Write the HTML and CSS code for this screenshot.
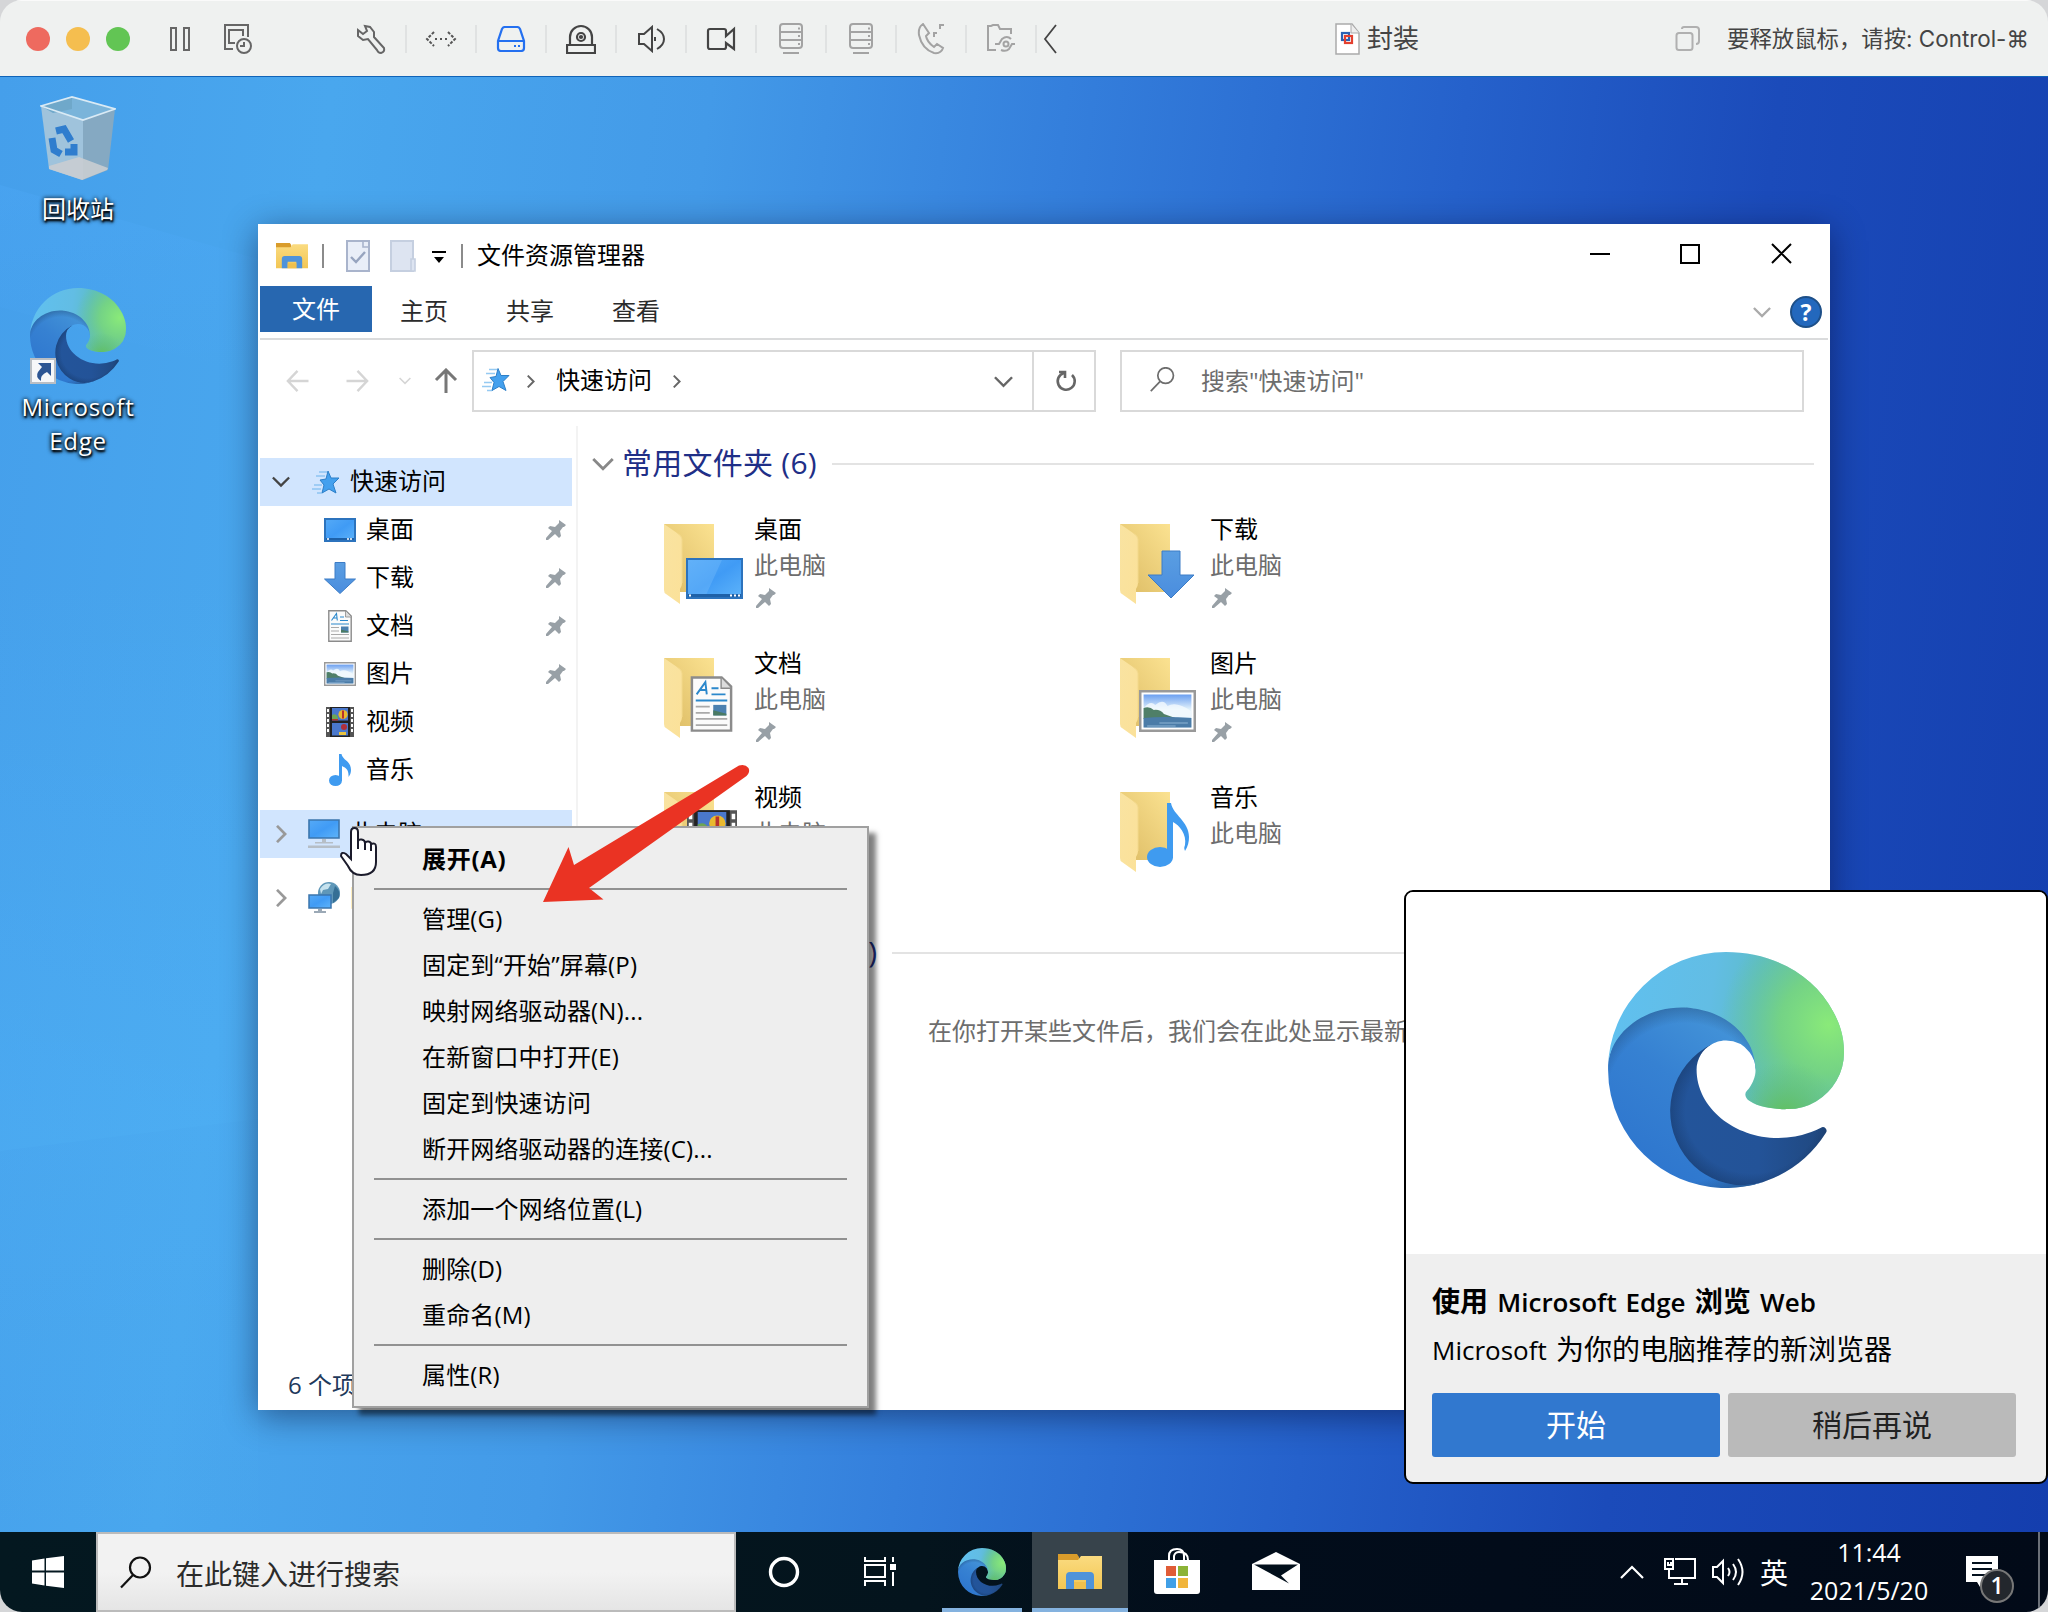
FILE: index.html
```html
<!DOCTYPE html>
<html lang="zh-CN">
<head>
<meta charset="utf-8">
<title>封装</title>
<link rel="stylesheet" href="styles.css">
</head>
<body>
<svg class="defs" width="0" height="0">
  <defs>
    <linearGradient id="e-dark" x1="60" y1="0" x2="240" y2="0" gradientUnits="userSpaceOnUse"><stop offset="0" stop-color="#23559b"/><stop offset=".6" stop-color="#235398"/><stop offset="1" stop-color="#20487f"/></linearGradient>
    <radialGradient id="e-dark2" cx="161" cy="178" r="98" gradientTransform="matrix(1 0 0 .93 0 12)" gradientUnits="userSpaceOnUse"><stop offset=".74" stop-color="#10294d" stop-opacity="0"/><stop offset="1" stop-color="#10294d" stop-opacity=".5"/></radialGradient>
    <linearGradient id="e-mid" x1="150" y1="95" x2="45" y2="240" gradientUnits="userSpaceOnUse"><stop offset="0" stop-color="#4393d8"/><stop offset=".45" stop-color="#3681d2"/><stop offset="1" stop-color="#2e76ce"/></linearGradient>
    <radialGradient id="e-mid2" cx="88" cy="168" r="116" gradientUnits="userSpaceOnUse"><stop offset=".74" stop-color="#1c3f66" stop-opacity="0"/><stop offset="1" stop-color="#1c3f66" stop-opacity=".6"/></radialGradient>
    <linearGradient id="e-top" x1="10" y1="80" x2="210" y2="110" gradientUnits="userSpaceOnUse"><stop offset="0" stop-color="#60c0ef"/><stop offset=".5" stop-color="#62bde4"/><stop offset=".75" stop-color="#5dbdc9"/><stop offset="1" stop-color="#63c0b0"/></linearGradient>
    <radialGradient id="e-green" cx="244" cy="84" r="118" gradientTransform="rotate(10 244 84)" gradientUnits="userSpaceOnUse"><stop offset="0" stop-color="#8aea79"/><stop offset=".45" stop-color="#76d580" stop-opacity=".9"/><stop offset="1" stop-color="#65c38b" stop-opacity="0"/></radialGradient>
    <radialGradient id="e-green2" cx="196" cy="186" r="62" gradientUnits="userSpaceOnUse"><stop offset="0" stop-color="#61c055"/><stop offset="1" stop-color="#61c070" stop-opacity="0"/></radialGradient>
    <linearGradient id="g-blue" x1="0" y1="0" x2="1" y2="1"><stop offset="0" stop-color="#55aaf7"/><stop offset=".5" stop-color="#409bf5"/><stop offset="1" stop-color="#5eb4fa"/></linearGradient>
    <linearGradient id="g-back" x1="0" y1="1" x2="1" y2="0"><stop offset="0" stop-color="#dcbb63"/><stop offset="1" stop-color="#fbe291"/></linearGradient>
    <linearGradient id="g-front" x1="0" y1="0" x2="1" y2="1"><stop offset="0" stop-color="#f9e3a1"/><stop offset="1" stop-color="#fbe199"/></linearGradient>
    <linearGradient id="g-exp" x1="0" y1="0" x2="0" y2="1"><stop offset="0" stop-color="#fadb80"/><stop offset="1" stop-color="#f3c653"/></linearGradient>
    <linearGradient id="g-sky" x1="0" y1="0" x2="0" y2="1"><stop offset="0" stop-color="#6b9ff0"/><stop offset=".45" stop-color="#e3f2fb"/><stop offset="1" stop-color="#cfe4f4"/></linearGradient>
    <linearGradient id="g-arrow" x1="0" y1="0" x2="0" y2="1"><stop offset="0" stop-color="#5a9ee2"/><stop offset="1" stop-color="#4a8dde"/></linearGradient>

    <symbol id="edge" viewBox="0 0 256 256"><g transform="translate(-4.63 -4.92)">
      <path fill="url(#e-dark)" d="M235.68 195.46a93.73 93.73 0 01-10.54 4.71 101.87 101.87 0 01-35.9 6.46c-47.32 0-88.54-32.55-88.54-74.32A31.48 31.48 0 01117.13 105c-42.8 1.8-53.8 46.4-53.8 72.53 0 73.88 68.09 81.37 82.76 81.37 7.91 0 19.84-2.3 27-4.56l1.31-.44a128.34 128.34 0 0066.6-52.8 4 4 0 00-5.32-5.64z"/>
      <path fill="url(#e-dark2)" d="M235.68 195.46a93.73 93.73 0 01-10.54 4.71 101.87 101.87 0 01-35.9 6.46c-47.32 0-88.54-32.55-88.54-74.32A31.48 31.48 0 01117.13 105c-42.8 1.8-53.8 46.4-53.8 72.53 0 73.88 68.09 81.37 82.76 81.37 7.91 0 19.84-2.3 27-4.56l1.31-.44a128.34 128.34 0 0066.6-52.8 4 4 0 00-5.32-5.64z"/>
      <path fill="url(#e-mid)" d="M110.34 246.34A79.2 79.2 0 0187.6 225a80.72 80.72 0 0129.53-120c3.12-1.47 8.45-4.13 15.54-4a32.35 32.35 0 0125.69 13 31.88 31.88 0 016.36 18.66c0-.21 24.46-79.6-80-79.6-43.9 0-80 41.66-80 78.21a130.15 130.15 0 0012.11 56 128 128 0 00156.38 67.11 75.55 75.55 0 01-62.78-8z"/>
      <path fill="url(#e-mid2)" d="M110.34 246.34A79.2 79.2 0 0187.6 225a80.72 80.72 0 0129.53-120c3.12-1.47 8.45-4.13 15.54-4a32.35 32.35 0 0125.69 13 31.88 31.88 0 016.36 18.66c0-.21 24.46-79.6-80-79.6-43.9 0-80 41.66-80 78.21a130.15 130.15 0 0012.11 56 128 128 0 00156.38 67.11 75.55 75.55 0 01-62.78-8z"/>
      <path fill="url(#e-top)" d="M156.94 153.78c-.81 1.05-3.3 2.5-3.3 5.66 0 2.61 1.7 5.12 4.72 7.23 14.38 10 41.49 8.68 41.56 8.68a59.56 59.56 0 0030.27-8.35 61.38 61.38 0 0030.43-52.88c.26-22.41-8-37.31-11.34-43.91-21.19-41.45-66.93-65.29-116.67-65.29a128 128 0 00-128 126.2c.48-36.54 36.8-66.05 80-66.05 3.5 0 23.46.34 42 10.07 16.34 8.58 24.9 18.94 30.85 29.21 6.18 10.67 7.28 24.15 7.28 29.52s-2.74 13.33-7.8 19.91z"/>
      <path fill="url(#e-green)" d="M156.94 153.78c-.81 1.05-3.3 2.5-3.3 5.66 0 2.61 1.7 5.12 4.72 7.23 14.38 10 41.49 8.68 41.56 8.68a59.56 59.56 0 0030.27-8.35 61.38 61.38 0 0030.43-52.88c.26-22.41-8-37.31-11.34-43.91-21.19-41.45-66.93-65.29-116.67-65.29a128 128 0 00-128 126.2c.48-36.54 36.8-66.05 80-66.05 3.5 0 23.46.34 42 10.07 16.34 8.58 24.9 18.94 30.85 29.21 6.18 10.67 7.28 24.15 7.28 29.52s-2.74 13.33-7.8 19.91z"/>
      <path fill="url(#e-green2)" d="M156.94 153.78c-.81 1.05-3.3 2.5-3.3 5.66 0 2.61 1.7 5.12 4.72 7.23 14.38 10 41.49 8.68 41.56 8.68a59.56 59.56 0 0030.27-8.35 61.38 61.38 0 0030.43-52.88V114H164.740q1 10-.74 22-1 10-7.060 17.780z"/>
    </g></symbol>

    <symbol id="explorer" viewBox="0 0 44 36"><path fill="#d99c2b" d="M0 0h19l2 3v4H0z"/><path fill="url(#g-exp)" d="M0 6h20l3-4h21v33H0z"/><path fill="#4f93da" d="M8 35V22q0-4 4-4h20q4 0 4 4v13h-8v-9H16v9z"/><path fill="#f0c04c" d="M16 28h12v7H16z"/></symbol>
    <symbol id="pin" viewBox="0 0 20 20"><path fill="#98a0a6" d="M13 0l7 5-2 2-1 0-3 4 1 5-2 2-4-4-7 6-2 0 0-2 6-7-4-3 2-2 5 1 4-4z"/></symbol>
    <symbol id="star" viewBox="0 0 28 24"><path fill="#43a0ee" stroke="#2d7fc8" stroke-width="1" d="M16 1l3 7h8l-6 6 3 9-7-4-7 4 2-8-4-5 6-1z"/><path stroke="#7dbdf0" stroke-width="1.600" d="M7 2h8M4 6h9M2 15h8M0 19h9M5 23h5" opacity=".8"/></symbol>
    <symbol id="screen" viewBox="0 0 32 24"><path fill="url(#g-blue)" stroke="#2c73bd" stroke-width="2" d="M1 1h30v22H1z"/><path fill="#1e61a8" d="M2 20h28v2H2z"/><path stroke="#fff" stroke-width="1.500" d="M3 21h2M23 21h2M26 21h2"/></symbol>
    <symbol id="down" viewBox="0 0 32 32"><path fill="url(#g-arrow)" stroke="#3c7cc6" stroke-width="1" d="M11 .5h10V17h10.500L16 31.500.5 17H11z"/></symbol>
    <symbol id="doc" viewBox="0 0 24 32"><path fill="#fbfbfb" stroke="#8b8b8b" stroke-width="1.400" d="M.8.800h17l5.400 5.200v25.200H.8z"/><path fill="#ddd" stroke="#8b8b8b" stroke-width=".8" d="M17.500 1v6H23"/><path fill="none" stroke="#2b88cc" stroke-width="1.100" d="M3.500 10.500L8.500 3.500l.8 7M5.500 8h3.500M12 7h4M12 10.500h8M3 14h18"/><path stroke="#a9a9a9" stroke-width="1" d="M3 17.500h8M3 21h8M3 24.500h18M3 28h18"/><path fill="#4b80b0" d="M13 16.500h7.500v6H13z"/><path fill="#4a7a63" d="M13 19.500l7.500 2v1H13z"/></symbol>
    <symbol id="pic" viewBox="0 0 56 42" preserveAspectRatio="none"><path fill="#fff" stroke="#999" stroke-width="2.500" d="M1.200 1.200h53.600v39.600H1.200z"/><path fill="url(#g-sky)" d="M4.500 4.500h47v33h-47z"/><path fill="#f4fafe" d="M5 18q6-8 11-3 8-7 12 1 9-5 23 5v6H5z" opacity=".8"/><path fill="#4f7f68" d="M4.500 18q6-2 10 2 6-1 10 4l14 5H4.500z"/><path fill="#4b7ca8" d="M4.500 28q20-2 47 0v9.500h-47z"/><path stroke="#8db4d4" d="M20 33h28M8 36h28"/></symbol>
    <symbol id="film" viewBox="0 0 28 30"><path fill="#555" d="M0 0h28v30H0z"/><path fill="#fff" d="M1 2h2v3H1zM1 7h2v3H1zM1 12h2v3H1zM1 17h2v3H1zM1 22h2v3H1zM25 2h2v3h-2zM25 7h2v3h-2zM25 12h2v3h-2zM25 17h2v3h-2zM25 22h2v3h-2z"/><path fill="#222" d="M4 0h20v30H4z"/><path fill="#4a78cc" d="M6 1h16v12.500H6zM6 16h16v12.500H6z"/><circle cx="17" cy="7.500" r="4.600" fill="#e9b92f"/><path fill="#b8322c" d="M16 3.500h2v8h-2zM6 11h6v2.500H6z"/><path fill="#6ea654" d="M6 8q4-2 6 2v2H6z"/><circle cx="18" cy="20" r="3" fill="#b02f3a"/><path fill="#e9c341" d="M13 25h7v3h-7z"/></symbol>
    <symbol id="note" viewBox="0 0 22 32"><ellipse cx="6.500" cy="26.500" rx="6.500" ry="5.500" fill="#3f9bf0"/><path fill="#3f9bf0" d="M10 0h2.500c1 6 9.500 7 9.500 16 0 3-1 5-2.500 7 .5-8-3-9-6.500-11v15h-3z"/></symbol>
    <symbol id="note-l" viewBox="0 0 44 64"><ellipse cx="13" cy="54" rx="13" ry="10" fill="#3f9bf0"/><path fill="#3f9bf0" d="M20 0h4c2 12 18 18 18 34 0 5-1 9-4 14-1-3-1-3 0-6 2-11-6-20-12-23v36h-6z"/></symbol>
    <symbol id="pc" viewBox="0 0 32 30"><path fill="url(#g-blue)" stroke="#3b76ad" stroke-width="1.600" d="M1 1h30v18H1z"/><path fill="#b6bec6" d="M14 20h4v3h7v1.500H7V23h7zM0 26.500h32v2.500H0z"/></symbol>
    <symbol id="net" viewBox="0 0 32 32"><circle cx="21" cy="11" r="11" fill="#5f97b8"/><path fill="#c6e2ee" d="M12 7q5-7 11-5l-3 5-5 1-2 4z"/><path fill="#356f95" d="M27 4q6 5 4 12l-6 5V11z"/><path fill="url(#g-blue)" stroke="#3b76ad" stroke-width="1.500" d="M1 13h22v13H1z"/><path fill="#9ba9b6" d="M10 27h4v2h4v2H6v-2h4z"/></symbol>
    <symbol id="folder" viewBox="0 0 50 80"><path fill="url(#g-back)" d="M0 0h50v68H16z"/><path fill="url(#g-front)" d="M0 0l13 9q5 3 5 6v44q0 3-2 6v15L2 70q-2-1-2-4z"/><path stroke="#f3d98c" fill="none" d="M13 9q5 3 5 6v44"/></symbol>
    <symbol id="mag" viewBox="0 0 32 32"><g fill="none" stroke="currentColor" stroke-width="2.200"><circle cx="20" cy="11" r="10"/><path d="M13 18.500L1 31"/></g></symbol>
    <symbol id="ch-d" viewBox="0 0 20 12"><path fill="none" stroke="currentColor" stroke-width="2.600" d="M1 1l9 9 9-9"/></symbol>
    <symbol id="ch-r" viewBox="0 0 12 20"><path fill="none" stroke="currentColor" stroke-width="3" d="M1 1l9 9-9 9"/></symbol>
    <symbol id="arr" viewBox="0 0 24 24"><path fill="none" stroke="currentColor" stroke-width="2.600" d="M24 12H2M12 1L1.500 12 12 23"/></symbol>
    <symbol id="server" viewBox="0 0 26 32"><g fill="none" stroke="currentColor" stroke-width="2"><rect x="2" y="1" width="22" height="24" rx="3"/><path d="M2 9h22M2 17h22M5 30h16M20 5.500h2M20 13h2M20 21h2"/></g></symbol>
  </defs>
</svg>

<div class="frame">
  <header class="macbar">
    <div class="lights"><i class="light red"></i><i class="light yellow"></i><i class="light green"></i></div>
    <div class="power">
      <svg width="22" height="26" viewBox="0 0 22 26" fill="none" stroke="#666" stroke-width="2"><path d="M2 2h5v22H2zM15 2h5v22h-5z"/></svg>
      <svg width="30" height="32" viewBox="0 0 30 32" fill="none" stroke="#666" stroke-width="2"><path d="M10 26H2V2h23v12M12 20H6V7h14v6"/><circle cx="21" cy="23" r="7"/><path d="M21 19v4h-4"/></svg>
    </div>
    <div class="tools">
      <span class="tool"><svg width="30" height="30" viewBox="0 0 30 30" fill="none" stroke="#666" stroke-width="2"><path d="M9 2l5 1 4 5v5l10 11q1 4-3 5-3 0-4-3L12 15 7 16 2 12V6l5 4 4-3z"/></svg></span>
      <span class="tool"><svg width="32" height="18" viewBox="0 0 32 18" fill="none" stroke="#555" stroke-width="2"><path stroke-dasharray="3 1.500" d="M9 2L2 9l7 7M23 2l7 7-7 7"/><path stroke-dasharray="2 3" d="M10 9h13"/></svg></span>
      <span class="tool"><svg width="30" height="26" viewBox="0 0 30 26" fill="none" stroke="#2470f0" stroke-width="2.200"><path d="M6 3q1-2 3-2h12q2 0 3 2l4 12v7q0 3-3 3H5q-3 0-3-3v-7zM2 15h26M18 20h2M22 20h2"/></svg></span>
      <span class="tool"><svg width="30" height="30" viewBox="0 0 30 30" fill="none" stroke="#444" stroke-width="2.200"><path d="M4 20V13a11 11 0 0122 0v7M1 21h28v8H1z"/><circle cx="15" cy="13" r="4"/><circle cx="15" cy="13" r="1"/></svg></span>
      <span class="tool"><svg width="28" height="28" viewBox="0 0 28 28" fill="none" stroke="#444" stroke-width="2"><path d="M2 9h5l8-7v24l-8-7H2zM18 12v4M20 4q7 4 7 10t-7 10"/></svg></span>
      <span class="tool"><svg width="30" height="26" viewBox="0 0 30 26" fill="none" stroke="#444" stroke-width="2.200"><path d="M4 3h14q2 0 2 2v5l8-7v20l-8-6v4q0 2-2 2H4q-2 0-2-2V5q0-2 2-2z"/></svg></span>
      <span class="tool dim"><svg width="26" height="32"><use href="#server"/></svg></span>
      <span class="tool dim"><svg width="26" height="32"><use href="#server"/></svg></span>
      <span class="tool dim"><svg width="28" height="32" viewBox="0 0 28 32" fill="none" stroke="currentColor" stroke-width="2"><path d="M6 1Q1 4 2 12q3 14 15 18 7 1 9-5l-6-4-3 3Q10 19 9 13l3-3zM17 14v-4h3M23 6V2h4"/></svg></span>
      <span class="tool dim"><svg width="30" height="30" viewBox="0 0 30 30" fill="none" stroke="currentColor" stroke-width="2"><path d="M10 26H2V2h3l2-1h5l2 4h11v5M9 20h4l3-5q5-4 9 0M29 20h-3l-3 5q-3 3-8 1"/><circle cx="20" cy="20" r="2.500"/></svg></span>
      <svg class="collapse" width="14" height="30" viewBox="0 0 14 30" fill="none" stroke="#444" stroke-width="1.800"><path d="M13 1L2 15l11 14"/></svg>
    </div>
    <div class="vmname">
      <svg width="25" height="32" viewBox="0 0 25 32"><path fill="#fff" stroke="#aaa" stroke-width="1.500" d="M1 1h16l7 9v21H1z"/><path fill="#eee" stroke="#aaa" d="M16 1v9h8"/><g fill="none" stroke-width="2.200"><rect x="7" y="10" width="7" height="7" stroke="#2b63b5"/><rect x="10" y="13" width="7" height="7" stroke="#e3402f"/></g></svg>
      <span>封装</span>
    </div>
    <div class="release">
      <svg width="25" height="26" viewBox="0 0 25 26" fill="none" stroke="#b0b0b0" stroke-width="2"><rect x="1.500" y="7" width="16" height="17" rx="2.500"/><path d="M7 3q0-2 2-2h12q3 0 3 3v11q0 3-3 3"/></svg>
      <span>要释放鼠标，请按: Control-⌘</span>
    </div>
  </header>

  <main class="desktop">
    <svg class="rays" width="700" height="1456" viewBox="0 0 700 1456"><defs><linearGradient id="ray1" x1="0" y1="0" x2="0" y2="1"><stop offset="0" stop-color="#52adff" stop-opacity=".22"/><stop offset="1" stop-color="#52adff" stop-opacity="0"/></linearGradient><linearGradient id="ray2" x1="0" y1="1" x2="0" y2="0"><stop offset="0" stop-color="#58c0ff" stop-opacity=".24"/><stop offset="1" stop-color="#58c0ff" stop-opacity="0"/></linearGradient><linearGradient id="ray3" x1="0" y1="0" x2="0" y2="1"><stop offset="0" stop-color="#58c0ff" stop-opacity=".16"/><stop offset="1" stop-color="#58c0ff" stop-opacity="0"/></linearGradient></defs><path d="M0 108L258 182V300L0 230z" fill="url(#ray1)"/><path d="M0 1074L258 1042V500H0z" fill="url(#ray2)"/><path d="M0 1074L258 1042V1456H0z" fill="url(#ray3)"/></svg>

    <div class="shortcut bin">
      <svg width="76" height="86" viewBox="0 0 76 86"><path fill="#7ab4da" d="M1 10L32 1l43 12-32 11z"/><path fill="#9fc3dc" d="M1 10l42 14v60L9 73z"/><path fill="#85a9c2" d="M75 13L43 24v60l25-10z"/><path fill="#c9cdd2" d="M9 70l30-9 29 11-1 2-25 10L9 73z" opacity=".9"/><path fill="#6fa8ca" d="M1 10L32 1v12l-19 4z"/><path fill="none" stroke="#d9eaf5" stroke-width="1.800" d="M1 10L32 1l43 12-32 11z"/><g fill="none" stroke="#2f7dce" stroke-width="7"><path d="M16 35l8-2 7 12M12 42l2 12 7 4M25 56l9 0 0-8"/></g></svg>
      <span>回收站</span>
    </div>
    <div class="shortcut edge-link">
      <svg width="96" height="96"><use href="#edge"/></svg>
      <svg class="badge" width="26" height="26" viewBox="0 0 26 26"><path fill="#f6f7f9" stroke="#b9bec4" stroke-width="2" d="M1 1h24v24H1z"/><path fill="#2c5593" d="M8 5h13v13l-4-4q-7 3-6 9-6-4-3-9l4-5z"/></svg>
      <span>Microsoft<br>Edge</span>
    </div>

    <section class="explorer">
      <div class="titlebar">
        <svg width="32" height="28"><use href="#explorer"/></svg>
        <i class="bar"></i>
        <svg class="q1" width="24" height="32" viewBox="0 0 24 32"><path fill="#e9eef8" stroke="#a9b4cc" stroke-width="2" d="M1 1h22v30H1z"/><path fill="none" stroke="#a9b4cc" stroke-width="1.600" d="M17 1v6h6"/><path fill="none" stroke="#97a4bf" stroke-width="2.400" d="M5 17l5 5 9-10"/></svg>
        <svg class="q2" width="26" height="32" viewBox="0 0 26 32"><path fill="#dde4f1" stroke="#c5cfe0" stroke-width="2" d="M1 1h22v30H1z"/><path fill="#dde4f1" stroke="#c5cfe0" stroke-width="1.600" d="M21 19h4v12h-4z"/></svg>
        <svg class="q3" width="14" height="14" viewBox="0 0 14 14"><path d="M0 0h14v2H0zM2 6h10l-5 6z"/></svg>
        <i class="bar b2"></i>
        <span class="caption">文件资源管理器</span>
        <svg class="winbtns" width="204" height="22" viewBox="0 0 204 22" fill="none" stroke="#000" stroke-width="2"><path d="M0 11h20M91 2h18v18H91zM182 1l19 19M201 1l-19 19"/></svg>
      </div>
      <div class="tabs">
        <span class="tab file">文件</span><span class="tab">主页</span><span class="tab">共享</span><span class="tab">查看</span>
        <svg class="fold" width="18" height="11"><use href="#ch-d"/></svg>
        <span class="help">?</span>
      </div>
      <div class="nav">
        <svg class="back" width="25" height="22"><use href="#arr"/></svg>
        <svg class="fwd" width="25" height="22"><use href="#arr"/></svg>
        <svg class="hist" width="12" height="8"><use href="#ch-d"/></svg>
        <svg class="up" width="24" height="26" viewBox="0 0 24 26" fill="none" stroke="#777" stroke-width="3"><path d="M12 25V3M2 12L12 2l10 10"/></svg>
        <div class="address">
          <svg width="28" height="25"><use href="#star"/></svg>
          <svg class="c1" width="8" height="13"><use href="#ch-r"/></svg>
          <span>快速访问</span>
          <svg class="c2" width="8" height="13"><use href="#ch-r"/></svg>
          <svg class="c3" width="19" height="12"><use href="#ch-d"/></svg>
          <div class="reload"><svg width="22" height="24" viewBox="0 0 22 24" fill="none" stroke="#666" stroke-width="2.600"><path d="M17 6a8.500 8.500 0 11-8-2"/><path d="M10 9V3H4"/></svg></div>
        </div>
        <div class="find"><svg width="25" height="25"><use href="#mag"/></svg><span>搜索"快速访问"</span></div>
      </div>
      <div class="panes">
        <nav class="tree">
          <div class="row root on"><svg class="tw" width="18" height="12"><use href="#ch-d"/></svg><svg class="ico" width="28" height="24"><use href="#star"/></svg><span>快速访问</span></div>
          <div class="row"><svg class="ico" width="32" height="24"><use href="#screen"/></svg><span>桌面</span><svg class="pin" width="20" height="20"><use href="#pin"/></svg></div>
          <div class="row"><svg class="ico" width="32" height="32"><use href="#down"/></svg><span>下载</span><svg class="pin" width="20" height="20"><use href="#pin"/></svg></div>
          <div class="row"><svg class="ico" width="32" height="32"><use href="#doc"/></svg><span>文档</span><svg class="pin" width="20" height="20"><use href="#pin"/></svg></div>
          <div class="row"><svg class="ico" width="32" height="24"><use href="#pic"/></svg><span>图片</span><svg class="pin" width="20" height="20"><use href="#pin"/></svg></div>
          <div class="row"><svg class="ico" width="32" height="30"><use href="#film"/></svg><span>视频</span></div>
          <div class="row"><svg class="ico" width="32" height="32"><use href="#note"/></svg><span>音乐</span></div>
          <div class="row root shut on gap"><svg class="tw" width="11" height="18"><use href="#ch-r"/></svg><svg class="ico" width="32" height="30"><use href="#pc"/></svg><span>此电脑</span></div>
          <div class="row root shut gap"><svg class="tw" width="11" height="18"><use href="#ch-r"/></svg><svg class="ico" width="32" height="32"><use href="#net"/></svg><span>网络</span></div>
        </nav>
        <div class="content">
          <div class="group"><svg width="22" height="13"><use href="#ch-d"/></svg><span>常用文件夹 (6)</span><i></i></div>
          <div class="grid">
            <div class="item"><div class="pic"><svg class="fo" width="50" height="80"><use href="#folder"/></svg><svg class="ov o-desk" width="57" height="41" viewBox="0 0 57 41"><path fill="url(#g-blue)" stroke="#2c73bd" stroke-width="2" d="M1 1h55v39H1z"/><path fill="#7cc0fb" opacity=".35" d="M36 2L20 37H2V2z"/><path fill="#1e61a8" d="M2 36h53v3H2z"/><path stroke="#fff" stroke-width="2" stroke-dasharray="2 2" d="M3 37.500h2M44 37.500h10"/></svg></div><div class="txt"><b>桌面</b><span>此电脑</span><svg width="22" height="20"><use href="#pin"/></svg></div></div>
            <div class="item"><div class="pic"><svg class="fo" width="50" height="80"><use href="#folder"/></svg><svg class="ov o-down" width="48" height="49" viewBox="0 0 48 49"><path fill="url(#g-arrow)" stroke="#3c7cc6" d="M15 1h18v24h14L24 48 1 25h14z"/></svg></div><div class="txt"><b>下载</b><span>此电脑</span><svg width="22" height="20"><use href="#pin"/></svg></div></div>
            <div class="item"><div class="pic"><svg class="fo" width="50" height="80"><use href="#folder"/></svg><svg class="ov o-doc" width="43" height="56"><use href="#doc"/></svg></div><div class="txt"><b>文档</b><span>此电脑</span><svg width="22" height="20"><use href="#pin"/></svg></div></div>
            <div class="item"><div class="pic"><svg class="fo" width="50" height="80"><use href="#folder"/></svg><svg class="ov o-pic" width="57" height="42"><use href="#pic"/></svg></div><div class="txt"><b>图片</b><span>此电脑</span><svg width="22" height="20"><use href="#pin"/></svg></div></div>
            <div class="item"><div class="pic"><svg class="fo" width="50" height="80"><use href="#folder"/></svg><svg class="ov o-film" width="50" height="54"><use href="#film"/></svg></div><div class="txt"><b>视频</b><span>此电脑</span></div></div>
            <div class="item"><div class="pic"><svg class="fo" width="50" height="80"><use href="#folder"/></svg><svg class="ov o-note" width="44" height="64"><use href="#note-l"/></svg></div><div class="txt"><b>音乐</b><span>此电脑</span></div></div>
          </div>
          <div class="group recent"><svg width="22" height="13"><use href="#ch-d"/></svg><span>最近使用的文件 (0)</span><i></i></div>
          <p class="empty">在你打开某些文件后，我们会在此处显示最新的内容。</p>
        </div>
      </div>
      <div class="status">6 个项目</div>
    </section>

    <ul class="menu">
      <li class="strong">展开(A)</li><li class="sep"></li>
      <li>管理(G)</li><li>固定到“开始”屏幕(P)</li><li>映射网络驱动器(N)...</li><li>在新窗口中打开(E)</li><li>固定到快速访问</li><li>断开网络驱动器的连接(C)...</li><li class="sep"></li>
      <li>添加一个网络位置(L)</li><li class="sep"></li>
      <li>删除(D)</li><li>重命名(M)</li><li class="sep"></li>
      <li>属性(R)</li>
    </ul>

    <svg class="cursor" width="38" height="50" viewBox="0 0 38 50"><path fill="#fff" stroke="#1b1b2b" stroke-width="2" d="M11 32V5q0-4 3.500-4T18 5v10q0-3 3.500-2.500T25 16q1-2 3.500-1.500T31 17q5-2 5 3v15q0 13-15 13-9 0-13-9L1 29q0-5 5-2z"/><path stroke="#1b1b2b" stroke-width="2" d="M18 13v9M25 15v8M31 17v7"/></svg>
    <svg class="pointer" width="212" height="142" viewBox="540 762 212 142"><path fill="#ea3323" d="M543 902L568.500 847l5.500 18L739 765.500q6-2 9.500 2.500 2 4-2 8L589 888l14.500 11.500z"/></svg>

    <aside class="toast">
      <div class="hero"><svg width="236" height="236"><use href="#edge"/></svg></div>
      <div class="info">
        <h2>使用 <span>Microsoft Edge</span> 浏览 <span>Web</span></h2>
        <p><span>Microsoft</span> 为你的电脑推荐的新浏览器</p>
        <div class="buttons"><span class="btn go">开始</span><span class="btn">稍后再说</span></div>
      </div>
    </aside>
  </main>

  <footer class="taskbar">
    <div class="start"><svg width="32" height="32" viewBox="0 0 32 32"><path fill="#fff" d="M0 4.500L12.500 2.500V14.500H0zM14 2.200L32 0v14.500H14zM0 16.500h12.500V29.500L0 27.500zM14 16.500h18V32l-18-2.300z"/></svg></div>
    <div class="tsearch"><svg width="32" height="33"><use href="#mag"/></svg><span>在此键入进行搜索</span></div>
    <div class="app"><svg width="32" height="32" viewBox="0 0 32 32"><circle cx="16" cy="16" r="13.500" fill="none" stroke="#fff" stroke-width="3.400"/></svg></div>
    <div class="app"><svg width="34" height="32" viewBox="0 0 34 32" fill="none" stroke="#fff" stroke-width="2"><path d="M2 1v4h20V1M2 9h20v12H2zM2 30v-5h20v5M30 1v5M30 16v14"/><path fill="#fff" stroke="none" d="M27 8h6v6h-6z"/></svg></div>
    <div class="app open"><svg width="48" height="48"><use href="#edge"/></svg></div>
    <div class="app active"><svg width="44" height="36"><use href="#explorer"/></svg></div>
    <div class="app store"><svg width="46" height="46" viewBox="0 0 46 46"><path fill="#fff" d="M0 12h46v31q0 3-3 3H3q-3 0-3-3z"/><path fill="none" stroke="#fff" stroke-width="2" d="M15 12V8q0-7 8-7 7 0 7 7v4M20 12V8q1-4 5-4 9 0 9 8"/><path fill="#e05c37" d="M12 18h10v10H12z"/><path fill="#8cb337" d="M24 18h10v10H24z"/><path fill="#419fe6" d="M12 30h10v10H12z"/><path fill="#f1b53c" d="M24 30h10v10H24z"/></svg></div>
    <div class="app mail"><svg width="48" height="38" viewBox="0 0 48 38"><path fill="#fff" d="M0 12L24 0l24 12v26H0z"/><path fill="#020f1b" d="M2 12.500h44L29 23.500l8 8z"/></svg></div>
    <div class="tray">
      <svg class="t1" width="24" height="14" viewBox="0 0 24 14" fill="none" stroke="#fff" stroke-width="2.200"><path d="M1 13L12 2l11 11"/></svg>
      <svg class="t2" width="32" height="28" viewBox="0 0 32 28" fill="none" stroke="#fff" stroke-width="2"><path d="M11 1h20v19H5V12M18 20v5M10 26h14M1 1h8v10H1zM4 4v3h3V4"/></svg>
      <svg class="t3" width="33" height="28" viewBox="0 0 33 28" fill="none" stroke="#fff" stroke-width="2"><path d="M1 9h4l6-6v22l-6-6H1zM16 10q3 4 0 8M21 6q6 8 0 16M26 1q9 13 0 26"/></svg>
      <span class="ime">英</span>
      <div class="clock"><span>11:44</span><span>2021/5/20</span></div>
      <div class="notes"><svg width="32" height="32" viewBox="0 0 32 32"><path fill="#fff" d="M0 0h32v26H18l-4 5-3-5H0z"/><path stroke="#03101d" stroke-width="2" d="M6 7h20M6 13h20M6 19h14"/></svg><span>1</span></div>
      <i class="peek"></i>
    </div>
  </footer>
</div>
</body>
</html>
```
FILE: styles.css
```css
* { box-sizing: border-box; }
body { margin: 0; background: #d5d6d8; font-family: "Open Sans", "Noto Sans CJK SC", sans-serif; font-size: 24px; color: #000; overflow: hidden; }
svg { display: block; flex: none; }
.defs { position: absolute; }
.frame { width: 2048px; height: 1612px; display: flex; flex-direction: column; border-radius: 22px; overflow: hidden; }

/* host toolbar */
.macbar { height: 76px; background: #eff1f0; display: flex; align-items: center; border-top: 1px solid #fafafa; }
.macbar > div { flex: none; }
.lights { display: flex; gap: 16px; padding-left: 26px; }
.light { width: 24px; height: 24px; border-radius: 50%; }
.red { background: #ee6a5f; }
.yellow { background: #f5be4f; }
.green { background: #62c554; }
.power { display: flex; align-items: center; gap: 32px; margin-left: 39px; width: 168px; }
.tools { display: flex; align-items: center; width: 1000px; }
.tool { width: 70px; height: 28px; display: flex; align-items: center; justify-content: center; border-right: 2px solid #e0e2e2; }
.dim { color: #a3a3a3; }
.collapse { margin-left: 6px; }
.vmname { display: flex; align-items: center; gap: 7px; width: 340px; margin-left: -2px; font-size: 26px; color: #444; white-space: nowrap; }
.vmname span, .release span { padding-bottom: 3px; }
.release { display: flex; align-items: center; gap: 27px; font-family: Inter, "Noto Sans CJK SC", "DejaVu Sans", sans-serif; font-size: 22.400px; color: #444; white-space: nowrap; }

/* guest desktop: free canvas */
.desktop { position: relative; height: 1456px; overflow: hidden; border-top: 1px solid #1064b8;
  background: linear-gradient(97deg, #459feb 0%, #49a7ee 15%, #439ae8 32%, #347fdc 48%, #2561cb 66%, #1b4bba 80%, #143eae 100%); }
.rays { position: absolute; left: 0; top: 0; }
.shortcut { position: absolute; left: 18px; width: 120px; display: flex; flex-direction: column; align-items: center; color: #fff; text-align: center; line-height: 34px; text-shadow: 1px 2px 2px #000, 0 0 4px #000, 0 2px 4px rgba(0,0,0,.7); }
.bin { top: 19px; gap: 10px; }
.edge-link { top: 211px; gap: 6px; letter-spacing: .8px; }
.badge { position: absolute; left: 12px; top: 70px; }

.explorer { position: absolute; left: 258px; top: 147px; width: 1572px; height: 1186px; background: #fff; border: 2px solid #fff; box-shadow: 0 6px 32px rgba(0,0,30,.45); display: flex; flex-direction: column; }
.titlebar { height: 60px; display: flex; align-items: center; padding: 0 38px 0 16px; }
.titlebar > svg, .bar { margin-bottom: 1px; }
.bar { width: 2px; height: 24px; background: #8b8b8b; margin-left: 14px; }
.titlebar .q1 { margin-left: 22px; margin-bottom: 0; }
.titlebar .q2 { margin-left: 20px; margin-bottom: 0; }
.titlebar .q3 { margin: 4px 0 0 16px; }
.b2 { margin-left: 15px; }
.caption { margin-left: 14px; padding-bottom: 5px; }
.titlebar .winbtns { margin: 0 -4px 4px auto; }
.tabs { height: 54px; border-bottom: 2px solid #dadbdc; display: flex; align-items: flex-start; }
.tab { width: 106px; height: 46px; display: flex; align-items: center; justify-content: center; color: #2b2b2b; }
.file { width: 112px; height: 46px; padding-bottom: 3px; background: #2767b0; color: #fff; margin-right: -1px; }
.fold { margin: 21px 19px 0 auto; color: #aaa; }
.help { width: 32px; height: 32px; margin: 10px 6px 0 0; border-radius: 50%; background: #2368bd; border: 2px solid #1d4f88; color: #fff; font-weight: 700; font-size: 23px; line-height: 28px; text-align: center; }
.nav { height: 86px; display: flex; align-items: center; padding: 0 24px 4px 25px; color: #d5d5d5; }
.nav span { padding-bottom: 5px; }
.fwd { transform: scaleX(-1); margin-left: 35px; }
.hist { margin-left: 29px; }
.up { margin-left: 23px; margin-right: 2px; }
.address { width: 624px; height: 62px; margin-left: 12px; border: 2px solid #d9d9d9; display: flex; align-items: center; padding-left: 8px; color: #000; }
.address > svg:first-child { margin-bottom: 3px; }
.c1 { margin: 0 21px 0 17px; color: #666; }
.c2 { margin-left: 21px; color: #666; }
.c3 { margin: 2px 0 0 auto; color: #666; }
.reload { width: 62px; height: 58px; margin-left: 19px; border-left: 2px solid #d9d9d9; display: flex; align-items: center; justify-content: center; padding-left: 3px; }
.find { width: 684px; height: 62px; margin-left: 24px; border: 2px solid #d9d9d9; display: flex; align-items: center; gap: 26px; padding-left: 28px; color: #6d6d6d; }
.find svg { margin-bottom: 3px; }
.find span { padding-bottom: 3px; }
.panes { flex: 1; display: flex; min-height: 0; }
.tree { width: 318px; padding: 32px 4px 0 0; border-right: 2px solid #f3f3f3; }
.row { width: 312px; height: 48px; display: flex; align-items: center; padding-left: 64px; }
.row span { margin-left: 10px; padding-bottom: 6px; }
.row .pin { margin: 0 6px 0 auto; }
.root { padding-left: 12px; }
.root .ico { margin-left: 22px; }
.shut { padding-left: 16px; color: #000; }
.shut .ico { margin-left: 21px; }
.tw { color: #444; }
.shut .tw { color: #999; }
.on { background: #d1e5fe; }
.gap { margin-top: 16px; }
.content { flex: 1; min-width: 0; padding: 18px 14px 0 14px; }
.group { height: 40px; display: flex; align-items: center; font-size: 30px; line-height: 40px; color: #1f2f87; white-space: nowrap; }
.group svg { color: #888; margin-right: 8px; }
.group span { letter-spacing: .25px; padding-bottom: 2px; }
.group i { flex: 1; height: 2px; margin-left: 15px; background: #e3e3e3; }
.grid { display: grid; grid-template-columns: 456px 456px; grid-auto-rows: 134px; margin: 20px 0 0 72px; }
.item { display: flex; padding-top: 20px; }
.pic { position: relative; width: 90px; }
.ov { position: absolute; }
.o-desk { left: 22px; top: 34px; }
.o-down { left: 27px; top: 26px; }
.o-doc { left: 26px; top: 18px; }
.o-pic { left: 19px; top: 32px; }
.o-film { left: 23px; top: 18px; }
.o-note { left: 27px; top: 11px; }
.txt { display: flex; flex-direction: column; line-height: 36px; margin-top: -13px; }
.txt b { font-weight: 400; }
.txt span { color: #6d6d6d; }
.txt svg { margin: 5px 0 0 1px; }
.recent { margin-top: 27px; }
.empty { margin: 40px 0 0 336px; line-height: 36px; color: #6d6d6d; white-space: nowrap; }
.status { height: 52px; padding-left: 28px; line-height: 57px; color: #1e395b; }

.menu { position: absolute; left: 352px; top: 749px; width: 517px; height: 582px; margin: 0; padding: 9px 20px 0; list-style: none; background: #eeeeee; border: 2px solid #a0a0a0; box-shadow: 7px 7px 5px rgba(0,0,0,.5); }
.menu li { height: 46px; line-height: 44px; padding-left: 48px; letter-spacing: .15px; white-space: nowrap; }
.menu .sep { height: 2px; margin: 5px 0 7px; background: #919191; padding: 0; }
.menu .strong { font-weight: 700; letter-spacing: .7px; }
.cursor { position: absolute; left: 340px; top: 750px; }
.pointer { position: absolute; left: 540px; top: 685px; }

.toast { position: absolute; left: 1404px; top: 813px; width: 644px; height: 594px; border: 2px solid #000; border-radius: 9px; overflow: hidden; background: #efefef; }
.hero { height: 362px; background: #fff; display: flex; justify-content: center; padding-top: 60px; }
.info { padding: 23px 30px 0 26px; }
.info h2 { margin: 0; font-size: 28px; font-weight: 600; line-height: 48px; white-space: nowrap; word-spacing: 2px; }
.info p { margin: 0; font-size: 28px; line-height: 47px; white-space: nowrap; word-spacing: 2px; }
.info h2 span, .info p span { font-size: 26px; }
.buttons { display: flex; gap: 8px; margin-top: 19px; }
.btn { width: 288px; height: 64px; padding-bottom: 4px; border-radius: 3px; background: #bababa; color: #222; font-size: 30px; display: flex; align-items: center; justify-content: center; }
.go { background: #3178cf; color: #fff; }

/* guest taskbar */
.taskbar { height: 80px; display: flex; background: linear-gradient(90deg, #041820 0, #04141d 45%, #020d1b 60%, #020a18 100%); color: #fff; }
.start { width: 96px; display: flex; align-items: center; justify-content: center; }
.tsearch { width: 640px; border: 2px solid #bbb; background: linear-gradient(#f2f2f2 50%, #e5e5e5); display: flex; align-items: center; gap: 24px; padding-left: 22px; color: #2b2b2b; font-size: 28px; }
.tsearch svg { color: #111; }
.tsearch span { padding-top: 2px; }
.app { width: 96px; display: flex; align-items: center; justify-content: center; }
.open { width: 80px; margin: 0 10px 0 14px; border-bottom: 4px solid #84b2df; padding-top: 4px; }
.active { background: #37434b; border-bottom: 4px solid #84b2df; padding-top: 4px; }
.store { margin-left: 1px; padding-bottom: 2px; }
.mail { margin-left: 3px; padding-bottom: 2px; }
.tray { display: flex; align-items: center; margin-left: auto; }
.t2 { margin-left: 20px; }
.t3 { margin-left: 16px; }
.ime { font-size: 28px; margin-left: 15px; }
.clock { width: 118px; margin-left: 22px; padding-bottom: 2px; display: flex; flex-direction: column; align-items: center; line-height: 38px; font-size: 25px; }
.notes { position: relative; margin-left: 38px; }
.notes svg { margin-bottom: 1px; }
.notes span { position: absolute; left: 14px; top: 13px; width: 34px; height: 34px; border-radius: 50%; background: #23272d; border: 2px solid #777; font-size: 23px; font-weight: 600; line-height: 29px; text-align: center; }
.peek { width: 2px; height: 80px; background: #6b7078; margin: 0 8px 0 40px; }
```
